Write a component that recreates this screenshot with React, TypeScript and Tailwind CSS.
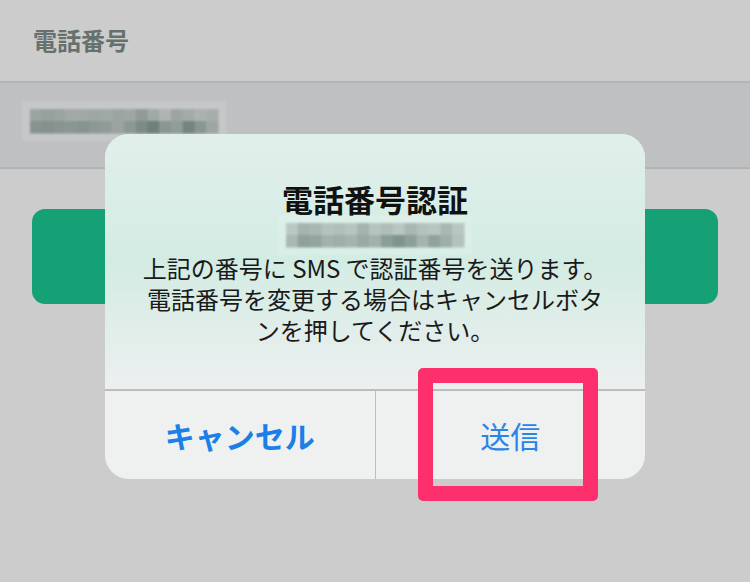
import React from "react";

const font = { fontFamily: '"Noto Sans CJK JP", "Noto Sans", sans-serif' };

function Mosaic({ width, cells, rows }: { width: number; cells: number; rows: string[][] }) {
  const cw = width / cells;
  return (
    <svg width={width + 16} height={rows.length * 12 + 16} viewBox={`-8 -8 ${width + 16} ${rows.length * 12 + 16}`}>
      <rect x={-8} y={-8} width={width + 16} height={rows.length * 12 + 16} fill="#ffffff" opacity={0.12} />
      {rows.map((r, ri) =>
        r.map((c, ci) => (
          <rect key={`${ri}-${ci}`} x={ci * cw} y={ri * 12} width={cw + 0.5} height={12.5} fill={c} />
        ))
      )}
    </svg>
  );
}

const row1 = ["#9aa4a0", "#97a19d", "#99a39f", "#a2aaa7", "#a0a9a6", "#9ea7a4", "#a1a9a6", "#9ba4a1", "#9ea7a4", "#8f9b97", "#a0a9a6", "#adb4b2", "#9ca5a2", "#a4acaa", "#abb2b0", "#a6aeab"];
const row2 = ["#86938f", "#84918d", "#88948f", "#8a9692", "#869390", "#8c9894", "#909b97", "#9aa3a0", "#8c9894", "#7d8b86", "#6f807a", "#8a9692", "#929d9a", "#738580", "#8a9692", "#9da6a3"];
const mrow1 = ["#b9c8c3", "#a4b4ae", "#a9b8b3", "#b4c3be", "#b0bfba", "#b7c5c0", "#a3b3ad", "#b6c4bf", "#afbeb9", "#b9c7c2", "#a7b7b1", "#b4c2bd", "#b8c6c1", "#a9b8b3", "#b8c6c1"];
const mrow2 = ["#a8b8b2", "#8ea19a", "#93a59e", "#a2b3ac", "#9cafa8", "#a4b4ae", "#98aaa3", "#a1b2ac", "#8b9e97", "#7f948c", "#8c9f98", "#a4b5ae", "#8fa29b", "#9eafa9", "#b3c2bd"];

export default function App() {
  return (
    <div className="relative w-[750px] h-[582px] overflow-hidden bg-[#cccccc]" style={font}>
      <div className="h-[81px] flex items-center px-[33px] pb-[2px]">
        <span className="text-[24px] font-bold text-[#66706d] leading-none">電話番号</span>
      </div>
      <div className="h-[88px] bg-[#bfc0c2] border-y-2 border-[#b3b4b6] flex items-center px-[22px] pb-[8px]">
        <div className="blur-[1px]">
          <Mosaic width={188} cells={16} rows={[row1, row2]} />
        </div>
      </div>
      <div className="px-[32px] pt-[40px]">
        <div className="h-[95px] rounded-[13px] bg-[#16a075]" />
      </div>

      <div className="absolute left-[105px] top-[134px] w-[540px] h-[345px] rounded-[24px] overflow-hidden flex flex-col bg-[#eff0f0]">
        <div className="h-[257px] flex flex-col items-center bg-gradient-to-b from-[#e1efea] via-[#d3ece3] to-[#eceff0] border-b-2 border-[#bcbebe]">
          <div className="mt-[45px] text-[31px] font-bold text-[#111111] leading-[40px]">電話番号認証</div>
          <div className="blur-[1px] h-[32px] flex items-center">
            <Mosaic width={178} cells={15} rows={[mrow1, mrow2]} />
          </div>
          <div className="mt-[1px] text-[24px] leading-[31px] text-[#1a1a1a] text-center px-[30px]">
            上記の番号に SMS で認証番号を送ります。
            <br />
            電話番号を変更する場合はキャンセルボタ
            <br />
            ンを押してください。
          </div>
        </div>
        <div className="flex-1 flex">
          <div className="flex-1 flex items-center justify-center border-r border-[#bcbebe]">
            <span className="text-[30px] font-bold text-[#1a7fe6] leading-none">キャンセル</span>
          </div>
          <div className="flex-1 flex items-center justify-center">
            <span className="text-[30px] text-[#2a85e6] leading-none">送信</span>
          </div>
        </div>
      </div>

      <div className="absolute left-[418px] top-[368px] w-[180px] h-[133px] rounded-[5px] border-[15px] border-[#fd2f6c]" />
    </div>
  );
}
